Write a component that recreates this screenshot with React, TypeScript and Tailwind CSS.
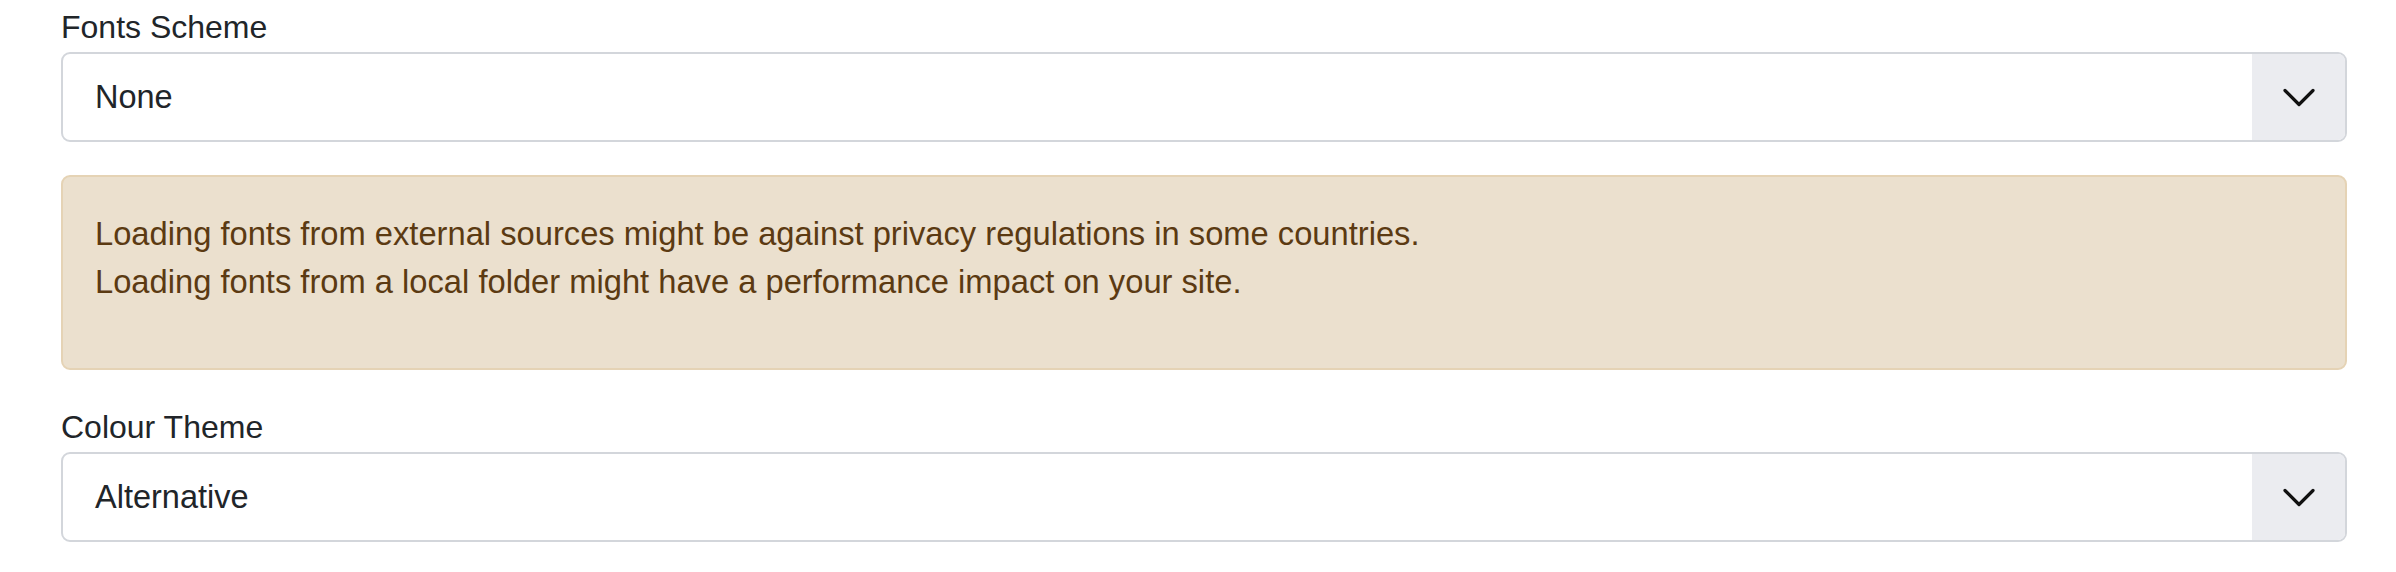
const Chevron = () => (
  <svg width="32" height="19" viewBox="0 0 32 19" fill="none" className="block">
    <path d="M2 2.5l14 14 14-14" stroke="#111" strokeWidth="3.2" strokeLinecap="round" strokeLinejoin="round" />
  </svg>
);

const SelectField = ({ label, value }: { label: string; value: string }) => (
  <div>
    <div className="text-[32px] leading-[40px] text-[#212529] mb-[5px]">{label}</div>
    <div className="flex h-[90px] border-2 border-[#d3d6db] rounded-[9px] overflow-hidden bg-white">
      <div className="flex-1 flex items-center pl-[32px] text-[32.5px] text-[#212529]">{value}</div>
      <div className="w-[93px] bg-[#ebecf0] flex items-center justify-center">
        <Chevron />
      </div>
    </div>
  </div>
);

export default function App() {
  return (
    <div className="w-full h-[572px] bg-white px-[61px] pt-[7px] font-['Liberation_Sans',Arial,sans-serif]">
      <div className="w-[2286px]">
        <SelectField label="Fonts Scheme" value="None" />

        <div className="mt-[33px] h-[195px] border-2 border-[#e5d3b5] bg-[#ebe0ce] rounded-[9px] px-[32px] pt-[33px] text-[32.7px] leading-[48px] text-[#5b3a12]">
          <p>Loading fonts from external sources might be against privacy regulations in some countries.</p>
          <p>Loading fonts from a local folder might have a performance impact on your site.</p>
        </div>

        <div className="mt-[37px]">
          <SelectField label="Colour Theme" value="Alternative" />
        </div>
      </div>
    </div>
  );
}
